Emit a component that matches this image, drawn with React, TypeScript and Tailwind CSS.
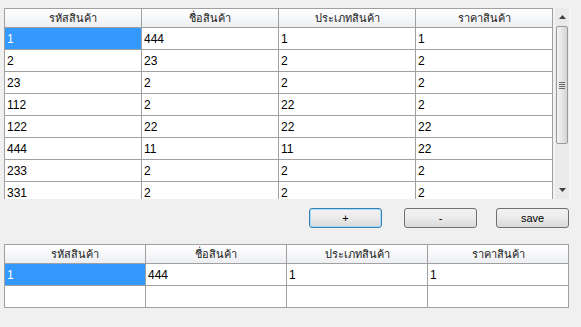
const topRows = [
  ["1", "444", "1", "1"],
  ["2", "23", "2", "2"],
  ["23", "2", "2", "2"],
  ["112", "2", "22", "2"],
  ["122", "22", "22", "22"],
  ["444", "11", "11", "22"],
  ["233", "2", "2", "2"],
  ["331", "2", "2", "2"],
];

const headers = ["รหัสสินค้า", "ชื่อสินค้า", "ประเภทสินค้า", "ราคาสินค้า"];

const font = "font-['Liberation_Sans','Noto_Sans','Tahoma',sans-serif]";

function Grid({ rows, colClass }: { rows: string[][]; colClass: string }) {
  return (
    <div className={`grid ${colClass} border-t border-l border-[#a0a0a0] bg-white`}>
      {headers.map((h) => (
        <div
          key={h}
          className="h-[19px] flex items-center justify-center border-r border-b border-[#a0a0a0] bg-gradient-to-b from-white via-[#f7f8fa] to-[#eceef1] text-[11px] text-[#1a1a1a]"
        >
          {h}
        </div>
      ))}
      {rows.map((r, i) =>
        r.map((c, j) => {
          const sel = i === 0 && j === 0;
          return (
            <div
              key={`${i}-${j}`}
              className={`h-[22px] flex items-center pl-[2px] border-r border-b border-[#a0a0a0] text-[12px] ${
                sel ? "bg-[#3399ff] text-white" : "bg-white text-black"
              }`}
            >
              {c}
            </div>
          );
        })
      )}
    </div>
  );
}

function ScrollBar() {
  return (
    <div className="w-[16px] h-[191px] ml-[1px] flex flex-col bg-[#eaeaea] border-x border-[#f5f5f5]">
      <div className="h-[18px] flex items-center justify-center">
        <svg width="7" height="4" viewBox="0 0 7 4">
          <path d="M0 4 L3.5 0 L7 4 Z" fill="#404040" />
        </svg>
      </div>
      <div className="h-[118px] mx-[1px] rounded-[2px] border border-[#9a9a9a] bg-gradient-to-r from-[#f3f3f3] via-[#e6e6e6] to-[#d4d4d4] flex flex-col items-center justify-center gap-[1px]">
        <div className="w-[6px] h-px bg-[#6a6a6a]" />
        <div className="w-[6px] h-px bg-[#6a6a6a]" />
        <div className="w-[6px] h-px bg-[#6a6a6a]" />
        <div className="w-[6px] h-px bg-[#6a6a6a]" />
      </div>
      <div className="flex-1" />
      <div className="h-[18px] flex items-center justify-center">
        <svg width="7" height="4" viewBox="0 0 7 4">
          <path d="M0 0 L3.5 4 L7 0 Z" fill="#404040" />
        </svg>
      </div>
    </div>
  );
}

function Btn({ label, focus, className }: { label: string; focus?: boolean; className?: string }) {
  return (
    <button
      className={`w-[73px] h-[20px] rounded-[3px] border text-[11px] text-black flex items-center justify-center bg-gradient-to-b from-[#f2f2f2] via-[#ebebeb] to-[#d9d9d9] ${
        focus ? "border-[#3c7fb1] shadow-[inset_0_0_0_1px_#9fdcf5]" : "border-[#707070]"
      } ${className ?? ""}`}
    >
      {label}
    </button>
  );
}

export default function App() {
  return (
    <div className={`w-[581px] h-[327px] bg-[#f0f0f0] pt-[8px] pl-[4px] ${font}`}>
      <div className="flex">
        <div className="h-[191px] overflow-hidden">
          <Grid rows={topRows} colClass="grid-cols-[137px_137px_137px_137px] w-[549px]" />
        </div>
        <ScrollBar />
      </div>
      <div className="flex mt-[9px]">
        <Btn label="+" focus className="ml-[305px]" />
        <Btn label="-" className="ml-[22px]" />
        <Btn label="save" className="ml-[19px]" />
      </div>
      <div className="mt-[16px] w-[565px]">
        <Grid rows={[["1", "444", "1", "1"], ["", "", "", ""]]} colClass="grid-cols-[141px_141px_141px_141px]" />
      </div>
    </div>
  );
}
